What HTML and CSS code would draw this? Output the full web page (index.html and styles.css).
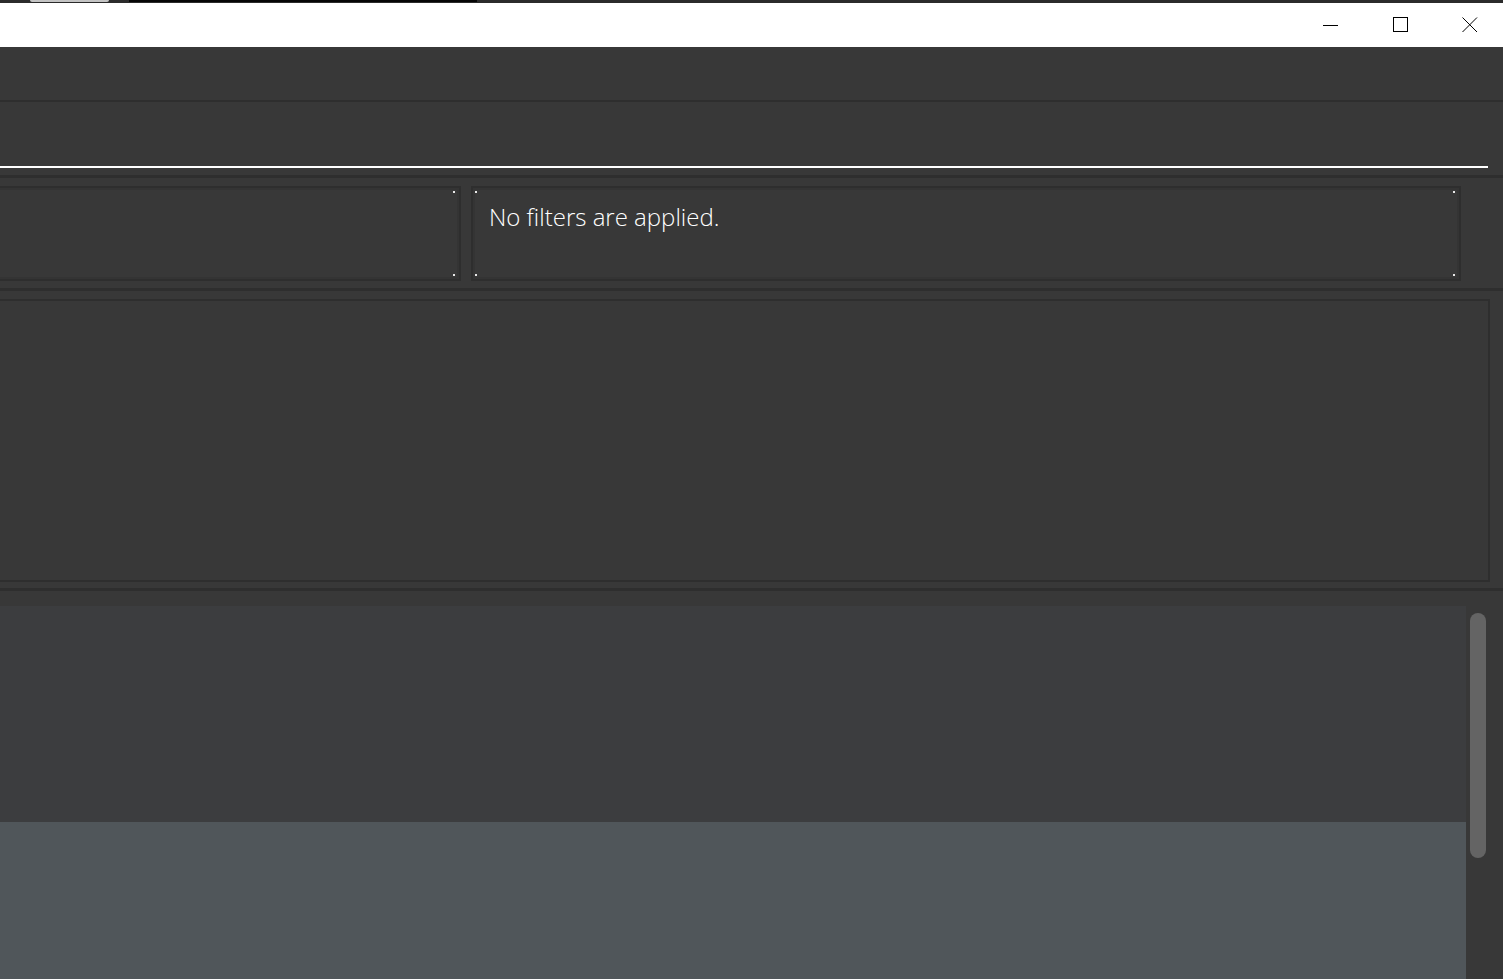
FILE: index.html
```html
<!DOCTYPE html>
<html lang="en">
<head>
  <meta charset="UTF-8">
  <meta name="viewport" content="width=device-width, initial-scale=1.0">
  <link rel="stylesheet" href="styles.css">
  <title>Address Book</title>
</head>
<body>
  <div class="topstrip">
    <div class="tab"></div>
    <div class="band"></div>
  </div>
  <div class="titlebar">
    <div class="winbtn">
      <svg width="16" height="16" viewBox="0 0 16 16"><path d="M0 8.5H15" stroke="#000" stroke-width="1"/></svg>
    </div>
    <div class="winbtn">
      <svg width="16" height="16" viewBox="0 0 16 16"><rect x="0.5" y="0.5" width="14" height="14" fill="none" stroke="#000" stroke-width="1"/></svg>
    </div>
    <div class="winbtn">
      <svg width="16" height="16" viewBox="0 0 16 16"><path d="M0.5 0.5L15 15M15 0.5L0.5 15" stroke="#000" stroke-width="1"/></svg>
    </div>
  </div>

  <div class="menubar"></div>

  <div class="command">
    <div class="command-input"></div>
  </div>

  <div class="filters">
    <div class="box box-left">
      <span class="dot tr"></span><span class="dot br"></span>
    </div>
    <div class="box box-right">
      <span class="dot tl"></span><span class="dot bl"></span>
      <span class="dot tr"></span><span class="dot br"></span>
      <p class="filter-text">No filters are applied.</p>
    </div>
  </div>

  <div class="result">
    <div class="result-box"></div>
  </div>

  <div class="list">
    <div class="rows">
      <div class="row"></div>
      <div class="row row-selected"></div>
    </div>
    <div class="scrollbar">
      <div class="thumb"></div>
    </div>
  </div>
</body>
</html>
```

FILE: styles.css
```css
body {
  margin: 0;
  height: 979px;
  overflow: hidden;
  background-color: #383838;
  font-family: "Open Sans", "Noto Sans", sans-serif;
  display: flex;
  flex-direction: column;
}

.topstrip {
  height: 3px;
  background: #2b2b2b;
  display: flex;
}
.tab {
  margin-left: 30px;
  width: 79px;
  height: 2px;
  background: #c4c4c4;
  border-radius: 0 0 2px 2px;
}
.band {
  margin-left: 20px;
  width: 348px;
  height: 2px;
  background: #050505;
}

.titlebar {
  height: 44px;
  background: #ffffff;
  display: flex;
  justify-content: flex-end;
}
.winbtn {
  width: 70px;
  display: flex;
  align-items: center;
  justify-content: center;
}
.winbtn:last-child {
  width: 67px;
}

.menubar {
  height: 53px;
  border-bottom: 2px solid #2e2e2e;
}

.command {
  height: 73px;
  border-bottom: 3px solid #2e2e2e;
}
.command-input {
  margin-top: 64px;
  width: 1488px;
  height: 2px;
  background: #ffffff;
}

.filters {
  display: flex;
  gap: 10px;
  padding-top: 8px;
  box-sizing: border-box;
  height: 113px;
  border-bottom: 3px solid #2e2e2e;
}
.box {
  position: relative;
  height: 95px;
  box-sizing: border-box;
  border: 2px solid #2e2e2e;
  box-shadow: inset 0 0 0 2px #343434;
}
.box-left {
  margin-left: -10px;
  width: 471px;
}
.box-right {
  width: 990px;
}
.dot {
  position: absolute;
  width: 2px;
  height: 2px;
  background: #e8e8e8;
}
.dot.tr { top: 3px; right: 4px; }
.dot.br { bottom: 3px; right: 4px; }
.dot.tl { top: 3px; left: 2px; }
.dot.bl { bottom: 3px; left: 2px; }

.filter-text {
  margin: 12px 0 0 16px;
  color: #ffffff;
  font-size: 24px;
  font-weight: 300;
}

.result {
  height: 300px;
  padding-top: 8px;
  box-sizing: border-box;
  border-bottom: 3px solid #2e2e2e;
}
.result-box {
  margin-left: -10px;
  width: 1500px;
  height: 283px;
  box-sizing: border-box;
  border: 2px solid #2e2e2e;
}

.list {
  flex: 1;
  display: flex;
  padding-top: 15px;
}
.rows {
  width: 1466px;
  display: flex;
  flex-direction: column;
}
.row {
  height: 216px;
  background: #3c3d3f;
}
.row-selected {
  flex: 1;
  background: #50565a;
}
.scrollbar {
  flex: 1;
  padding: 7px 0 0 4px;
}
.thumb {
  width: 16px;
  height: 245px;
  border-radius: 8px;
  background: #646464;
}
```
